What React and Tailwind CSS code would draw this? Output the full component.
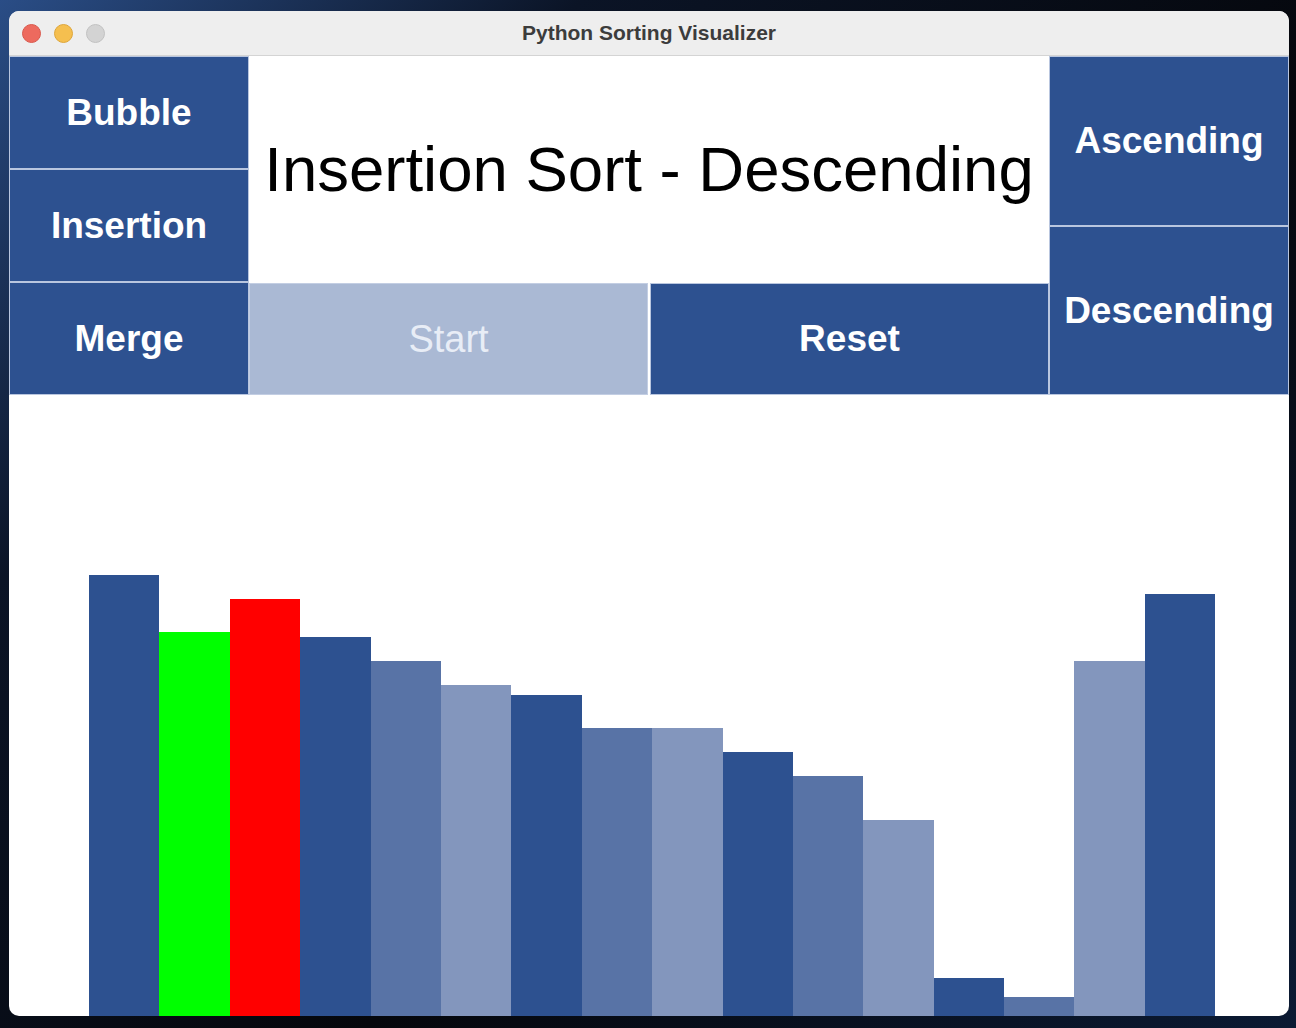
const BARS = [
  { h: 441, c: "bg-[#2d5190]" },
  { h: 384, c: "bg-[#00ff00]" },
  { h: 417, c: "bg-[#ff0000]" },
  { h: 379, c: "bg-[#2d5190]" },
  { h: 355, c: "bg-[#5873a6]" },
  { h: 331, c: "bg-[#8396bd]" },
  { h: 321, c: "bg-[#2d5190]" },
  { h: 288, c: "bg-[#5873a6]" },
  { h: 288, c: "bg-[#8396bd]" },
  { h: 264, c: "bg-[#2d5190]" },
  { h: 240, c: "bg-[#5873a6]" },
  { h: 196, c: "bg-[#8396bd]" },
  { h: 38, c: "bg-[#2d5190]" },
  { h: 19, c: "bg-[#5873a6]" },
  { h: 355, c: "bg-[#8396bd]" },
  { h: 422, c: "bg-[#2d5190]" },
];

function Btn({ children, className = "" }) {
  return (
    <button
      className={
        "flex-1 flex items-center justify-center border border-[#b9c6df] bg-[#2d5190] text-white font-bold text-[37px] " +
        className
      }
    >
      {children}
    </button>
  );
}

export default function App() {
  return (
    <div
      className="w-[1296px] h-[1028px] pt-[11px] pl-[9px] bg-[linear-gradient(135deg,#2a4d86_0%,#0b1426_25%,#05070c_60%,#0b1a33_100%)]"
      style={{ fontFamily: '"Liberation Sans", Arial, sans-serif' }}
    >
      <div className="w-[1280px] h-[1005px] rounded-[10px] overflow-hidden bg-white flex flex-col">
        {/* title bar */}
        <div className="h-[45px] shrink-0 bg-[#eeeeee] border-b border-[#d4d4d4] relative flex items-center justify-center">
          <div className="absolute left-[13px] top-[13px] flex gap-[13px]">
            <span className="w-[19px] h-[19px] rounded-full bg-[#ed6a5e] border border-[#d9584c]" />
            <span className="w-[19px] h-[19px] rounded-full bg-[#f5bf4f] border border-[#dea63a]" />
            <span className="w-[19px] h-[19px] rounded-full bg-[#d3d3d3] border border-[#c2c2c2]" />
          </div>
          <span className="text-[21px] font-bold text-[#3c3c3c]">Python Sorting Visualizer</span>
        </div>

        {/* controls */}
        <div className="h-[339px] shrink-0 flex">
          <div className="w-[240px] flex flex-col">
            <Btn>Bubble</Btn>
            <Btn>Insertion</Btn>
            <Btn>Merge</Btn>
          </div>
          <div className="w-[800px] flex flex-col">
            <div className="flex-1 flex items-center justify-center text-[63.5px] text-black">
              Insertion Sort - Descending
            </div>
            <div className="h-[112px] flex gap-[2px]">
              <button className="flex-1 flex items-center justify-center bg-[#aab9d4] text-[#e8edf6] text-[38px] border border-[#c3cee3]">
                Start
              </button>
              <Btn>Reset</Btn>
            </div>
          </div>
          <div className="w-[240px] flex flex-col">
            <Btn>Ascending</Btn>
            <Btn>Descending</Btn>
          </div>
        </div>

        {/* chart */}
        <div className="flex-1 flex items-end pl-[80px]">
          {BARS.map((b, i) => (
            <div key={i} className={"w-[70.4px] " + b.c} style={{ height: b.h }} />
          ))}
        </div>
      </div>
    </div>
  );
}
